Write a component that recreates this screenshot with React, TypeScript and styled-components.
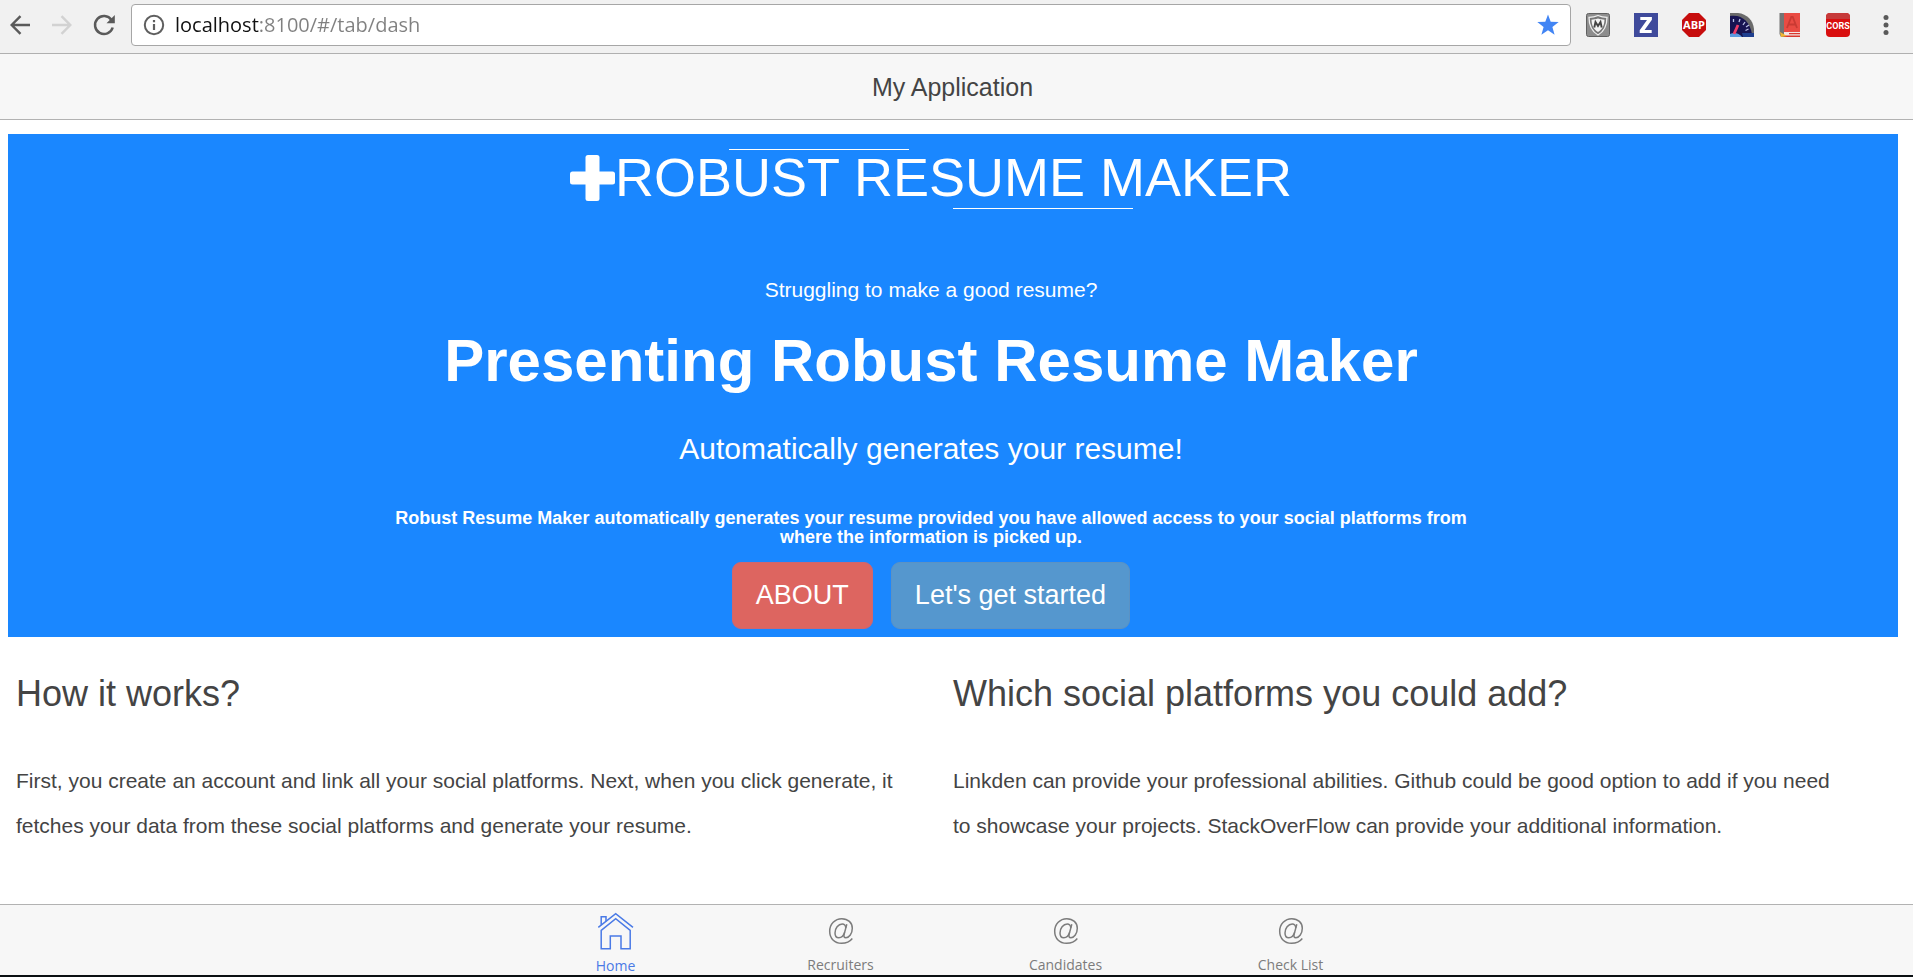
import React from "react";
import styled, { createGlobalStyle } from "styled-components";

const sans = `"Liberation Sans", Arial, Helvetica, sans-serif`;
const ui = `"Open Sans", "Noto Sans", sans-serif`;

const GlobalStyle = createGlobalStyle`
  *, *::before, *::after { box-sizing: border-box; }
  body { margin: 0; background: #fff; color: #444; font-family: ${sans}; }
  h1, h2, h3, p { margin: 0; font-weight: 400; }
  svg { display: block; }
`;

const Page = styled.div`
  display: flex;
  flex-direction: column;
  min-height: 100vh;
  border-bottom: 2px solid #0a0f12;
`;

const BrowserBar = styled.div`
  display: flex;
  align-items: center;
  gap: 15px;
  height: 54px;
  padding: 0 15px 3px 8px;
  background: #f1f1f1;
  border-bottom: 1px solid #b0b0b0;
`;

const ButtonGroup = styled.div<{ $gap: number }>`
  display: flex;
  align-items: center;
  gap: ${(p) => p.$gap}px;
`;

const IconButton = styled.button`
  width: 24px;
  height: 24px;
  padding: 0;
  border: 0;
  background: none;
  cursor: pointer;
`;

const AddressBox = styled.div`
  display: flex;
  flex: 1;
  align-items: center;
  gap: 10px;
  height: 42px;
  padding: 0 10px 0 11px;
  background: #fff;
  border: 1px solid #a6a6a6;
  border-radius: 4px;
`;

const AddressInput = styled.input`
  flex: 1;
  min-width: 0;
  height: 32px;
  padding: 0;
  border: 0;
  outline: 0;
  font: 20px/32px ${ui};
  color: transparent;
  background: linear-gradient(to right, #111 84px, #808080 84px);
  background-clip: text;
  -webkit-background-clip: text;
`;

const TitleBar = styled.header`
  display: flex;
  align-items: center;
  justify-content: center;
  height: 66px;
  padding: 0 8px 0 0;
  background: #f7f7f7;
  border-bottom: 1px solid #b2b2b2;
`;

const Title = styled.h1`
  font-size: 25px;
  line-height: 30px;
`;

const Content = styled.main`
  flex: 1;
  padding: 14px 15px 24px 8px;
`;

const Hero = styled.section`
  display: flex;
  flex-direction: column;
  align-items: center;
  padding: 15px 44px 8px 0;
  background: #1a87ff;
  color: #fff;
  text-align: center;
`;

const Brand = styled.h2`
  position: relative;
  display: flex;
  align-items: center;
  padding-bottom: 3px;
  font-size: 54px;
  line-height: 57px;

  &::before,
  &::after {
    content: "";
    position: absolute;
    width: 180px;
    height: 1px;
    background: #fff;
  }
  &::before { top: 0; left: 22%; }
  &::after { bottom: 0; left: 53%; }
`;

const Question = styled.p`
  margin-top: 66px;
  font-size: 21px;
  line-height: 30px;
`;

const Headline = styled.h2`
  margin-top: 23px;
  font-size: 60px;
  font-weight: 700;
  line-height: 66px;
`;

const Tagline = styled.h3`
  margin-top: 38px;
  font-size: 30px;
  line-height: 33px;
`;

const Pitch = styled.p`
  max-width: 1100px;
  margin-top: 44px;
  font-size: 18px;
  font-weight: 700;
  line-height: 19px;
`;

const Actions = styled.div`
  display: flex;
  gap: 18px;
  margin-top: 15px;
`;

const ActionButton = styled.button<{ $tone: "red" | "blue" }>`
  height: 67px;
  padding: 0 23px 2px;
  border: 1px solid ${(p) => (p.$tone === "red" ? "#cf6670" : "#5b92c4")};
  border-radius: 9px;
  background: ${(p) => (p.$tone === "red" ? "#dd6560" : "#5597ce")};
  color: #fff;
  font: 27px/36px ${sans};
  cursor: pointer;
`;

const Columns = styled.div`
  display: grid;
  grid-template-columns: 1fr 1fr;
  padding: 37px 8px 0;
`;

const Column = styled.section`
  padding-right: 44px;
`;

const ColumnTitle = styled.h2`
  font-size: 36px;
  line-height: 40px;
`;

const ColumnText = styled.p`
  margin-top: 44px;
  font-size: 21px;
  line-height: 45px;
`;

const TabBar = styled.nav`
  display: flex;
  justify-content: center;
  height: 71px;
  padding-right: 7px;
  background: #f7f7f7;
  border-top: 1px solid #b2b2b2;
`;

const Tab = styled.a<{ $active?: boolean }>`
  display: flex;
  flex-direction: column;
  align-items: center;
  width: 225px;
  padding-top: 7px;
  color: ${(p) => (p.$active ? "#4a7ae6" : "#7c7c7c")};
  font: 14px/20px ${ui};
  text-decoration: none;
`;

const TabIcon = styled.span`
  display: flex;
  align-items: center;
  justify-content: center;
  height: 38px;
  margin-bottom: 6px;
`;

const BackIcon = () => (
  <svg width="24" height="24" viewBox="0 0 24 24" fill="none" stroke="#5a5a5a" strokeWidth="2.4">
    <path d="M22 12H4M12.500 3.200L3.700 12l8.800 8.800" />
  </svg>
);

const ForwardIcon = () => (
  <svg width="24" height="24" viewBox="0 0 24 24" fill="none" stroke="#d2d2d2" strokeWidth="2.400">
    <path d="M2 12h18M11.500 3.200l8.800 8.800-8.800 8.800" />
  </svg>
);

const ReloadIcon = () => (
  <svg width="24" height="24" viewBox="0 0 24 24">
    <path d="M19.500 7A9 9 0 1 0 20.700 14.500" fill="none" stroke="#5a5a5a" strokeWidth="2.500" />
    <path d="M22.800 2v8.300h-8.300z" fill="#5a5a5a" />
  </svg>
);

const InfoIcon = () => (
  <svg width="22" height="22" viewBox="0 0 22 22">
    <circle cx="11" cy="11" r="9.200" fill="none" stroke="#5f5f5f" strokeWidth="2" />
    <path d="M9.900 10h2.200v6H9.900zM9.900 6h2.200v2.200H9.900z" fill="#5f5f5f" />
  </svg>
);

const StarIcon = () => (
  <svg width="24" height="24" viewBox="0 0 24 24">
    <path d="M12 1.500l2.700 7.300 8 .3-6.300 4.900 2.200 7.700L12 17.300l-6.600 4.400L7.600 14 1.300 9.100l8-.3z" fill="#4285f4" />
  </svg>
);

const ShieldIcon = () => (
  <svg width="24" height="24" viewBox="0 0 24 24">
    <rect x=".5" y=".5" width="23" height="23" rx="2" fill="#8d8d8d" stroke="#606060" />
    <path d="M12 2.500c3 1.300 6 1.800 9 1.800 0 8-2 13.800-9 17.700C5 18.100 3 12.300 3 4.300c3 0 6-.5 9-1.800z" fill="#777" stroke="#eee" strokeWidth="1.300" />
    <path d="M12 5.500c2.200.8 4.500 1 6.500 1.200-.2 5.800-2.200 9.500-6.500 12.300C7.700 16.200 5.700 12.500 5.500 6.700c2-.2 4.300-.4 6.500-1.200z" fill="#f4f4f4" />
    <path d="M8.300 14.500L9.500 9l2.500 4 2.500-4 1.200 5.500" fill="none" stroke="#444" strokeWidth="1.900" />
  </svg>
);

const ZIcon = () => (
  <svg width="24" height="24" viewBox="0 0 24 24">
    <path d="M0 0h24v24H0z" fill="#3f4a9b" />
    <path d="M6.300 4h11.600v2.800L10.600 17h7.100v3H5.700v-2.800L13 7H6.300z" fill="#fff" />
  </svg>
);

const IconText = styled.text`
  font-family: "Open Sans", sans-serif;
  font-weight: 700;
  text-anchor: middle;
`;

const NarrowIconText = styled(IconText)`
  font-family: "Liberation Sans Narrow", Roboto, sans-serif;
`;

const AdblockIcon = () => (
  <svg width="24" height="24" viewBox="0 0 24 24">
    <path d="M7 0h10l7 7v10l-7 7H7l-7-7V7z" fill="#c70d0d" />
    <IconText x="12" y="16" fontSize="11" fill="#fff">ABP</IconText>
  </svg>
);

const GaugeIcon = () => (
  <svg width="24" height="24" viewBox="0 0 24 24">
    <path d="M0 0h8c9 1 15 7 16 16v8H0z" fill="#6b6b6b" />
    <path d="M0 3c12-2 20 6 22 18v3H0z" fill="#171452" />
    <path d="M0 21c4-2 9-1 12 3H0z" fill="#5a9be0" />
    <path d="M12 20h12v4H13z" fill="#1f3f8f" />
    <path d="M4 21L8 12" stroke="#ef3d68" strokeWidth="2.800" />
    <path d="M3.500 6v3M10 6l-1 3M15 9l-2 3M18.500 16l-3 1.500M19 12l-3 2" stroke="#b9bfe5" strokeWidth="1.300" />
  </svg>
);

const BookIcon = () => (
  <svg width="24" height="24" viewBox="0 0 24 24">
    <path d="M1.500 0H6v24H3l-1.500-3z" fill="#747474" />
    <path d="M6 0h16v19H6z" fill="#e94b43" />
    <path d="M6 19h16v4H6z" fill="#f3e6e4" />
    <path d="M11 20h11v1.300H11zM6 22.500h16V24H6z" fill="#d8392f" />
    <path d="M2 19l7 4-6 1z" fill="#f2b632" />
    <path d="M9 15l4.300-11h1.400L19 15M10.800 11.500h6.400" fill="none" stroke="#c93a33" strokeWidth="1.800" />
  </svg>
);

const CorsIcon = () => (
  <svg width="24" height="24" viewBox="0 0 24 24">
    <rect width="24" height="24" rx="4" fill="#d90f0f" />
    <path d="M0 4a4 4 0 0 1 4-4h16a4 4 0 0 1 4 4v2H0z" fill="#c63a3a" />
    <NarrowIconText x="12" y="16" fontSize="9" fill="#fff">CORS</NarrowIconText>
  </svg>
);

const MenuIcon = () => (
  <svg width="24" height="24" viewBox="0 0 24 24" fill="#5a5a5a">
    <circle cx="12" cy="4.500" r="2.500" />
    <circle cx="12" cy="12" r="2.500" />
    <circle cx="12" cy="19.500" r="2.500" />
  </svg>
);

const PlusIcon = () => (
  <svg width="45" height="46" viewBox="0 0 45 46" fill="#fff">
    <rect x="0" y="16.500" width="45" height="13" rx="2.500" />
    <rect x="15.500" y="0" width="14" height="46" rx="2.500" />
  </svg>
);

const HomeIcon = () => (
  <svg width="38" height="38" viewBox="0 0 38 38" fill="none" stroke="currentColor" strokeWidth="1.500">
    <path d="M1.300 15.300L18.700 1.700 36 15.300" />
    <path d="M4.200 12.800V4.700H9v4.500" />
    <path d="M4.200 36.700V18.300L18.700 6.700l14.500 11.600v18.400H24V24H13.300v12.700z" />
  </svg>
);

const AtIcon = () => (
  <svg width="26" height="28" viewBox="0 0 26 28" fill="none" stroke="currentColor" strokeWidth="1.500">
    <path d="M24.300 21.500C22 24.500 18 26.300 13.500 26.300 6.500 26.300 1.700 21.500 1.700 14.300 1.700 7 7 1.700 13.800 1.700c6.200 0 10.500 4 10.500 9.600 0 5.400-3.200 9.400-6.400 9.400-1.800 0-2.300-1.300-1.800-3.300l2.700-10.200" />
    <path d="M17.800 11c-.2-2.700-1.600-4-3.600-4-4 0-7.200 4.500-7.200 8.900 0 3 1.500 4.800 3.800 4.800 2.700 0 4.900-2.200 5.800-5.300" />
  </svg>
);

const extensions = [
  { name: "Site shield", Icon: ShieldIcon },
  { name: "Zotero", Icon: ZIcon },
  { name: "Ad blocker", Icon: AdblockIcon },
  { name: "Speed test", Icon: GaugeIcon },
  { name: "Dictionary", Icon: BookIcon },
  { name: "Cross-origin requests", Icon: CorsIcon },
  { name: "Menu", Icon: MenuIcon },
];

const articles = [
  {
    title: "How it works?",
    text: "First, you create an account and link all your social platforms. Next, when you click generate, it fetches your data from these social platforms and generate your resume.",
  },
  {
    title: "Which social platforms you could add?",
    text: "Linkden can provide your professional abilities. Github could be good option to add if you need to showcase your projects. StackOverFlow can provide your additional information.",
  },
];

export default function App() {
  return (
    <Page>
      <GlobalStyle />
      <BrowserBar>
        <ButtonGroup $gap={18}>
          <IconButton aria-label="Back"><BackIcon /></IconButton>
          <IconButton aria-label="Forward"><ForwardIcon /></IconButton>
          <IconButton aria-label="Reload"><ReloadIcon /></IconButton>
        </ButtonGroup>
        <AddressBox>
          <InfoIcon />
          <AddressInput aria-label="Address" defaultValue="localhost:8100/#/tab/dash" />
          <IconButton aria-label="Bookmark"><StarIcon /></IconButton>
        </AddressBox>
        <ButtonGroup $gap={24}>
          {extensions.map(({ name, Icon }) => (
            <IconButton key={name} aria-label={name}><Icon /></IconButton>
          ))}
        </ButtonGroup>
      </BrowserBar>
      <TitleBar>
        <Title>My Application</Title>
      </TitleBar>
      <Content>
        <Hero>
          <Brand><PlusIcon />ROBUST RESUME MAKER</Brand>
          <Question>Struggling to make a good resume?</Question>
          <Headline>Presenting Robust Resume Maker</Headline>
          <Tagline>Automatically generates your resume!</Tagline>
          <Pitch>
            Robust Resume Maker automatically generates your resume provided you have allowed
            access to your social platforms from where the information is picked up.
          </Pitch>
          <Actions>
            <ActionButton $tone="red">ABOUT</ActionButton>
            <ActionButton $tone="blue">Let's get started</ActionButton>
          </Actions>
        </Hero>
        <Columns>
          {articles.map((a) => (
            <Column key={a.title}>
              <ColumnTitle>{a.title}</ColumnTitle>
              <ColumnText>{a.text}</ColumnText>
            </Column>
          ))}
        </Columns>
      </Content>
      <TabBar>
        <Tab href="#/tab/dash" $active>
          <TabIcon><HomeIcon /></TabIcon>
          Home
        </Tab>
        {["Recruiters", "Candidates", "Check List"].map((label) => (
          <Tab key={label} href={"#/tab/" + label.toLowerCase().replace(" ", "")}>
            <TabIcon><AtIcon /></TabIcon>
            {label}
          </Tab>
        ))}
      </TabBar>
    </Page>
  );
}
